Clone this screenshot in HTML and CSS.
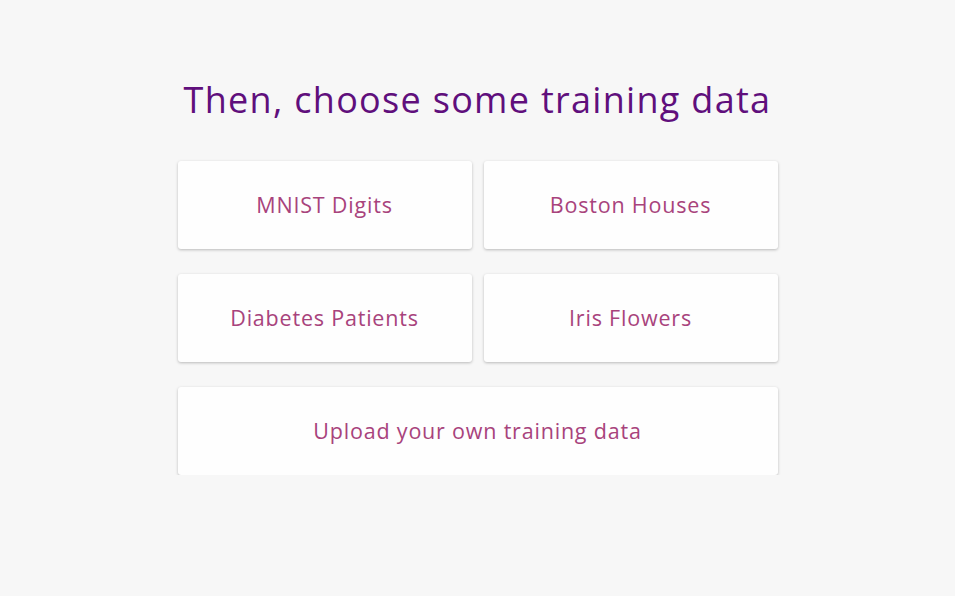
FILE: index.html
```html
<!DOCTYPE html>
<html lang="en">
<head>
<meta charset="utf-8">
<title>Choose training data</title>
<link rel="stylesheet" href="styles.css">
</head>
<body>
<main class="page">
  <h1 class="title">Then, choose some training data</h1>
  <div class="grid">
    <button class="card">MNIST Digits</button>
    <button class="card">Boston Houses</button>
    <button class="card">Diabetes Patients</button>
    <button class="card">Iris Flowers</button>
    <button class="card card-wide">Upload your own training data</button>
  </div>
</main>
</body>
</html>
```
FILE: styles.css
```css
html, body {
  margin: 0;
  padding: 0;
  background: #f7f7f7;
}
body {
  font-family: "Open Sans", "Noto Sans", sans-serif;
}
.page {
  display: flex;
  flex-direction: column;
  align-items: center;
  padding-top: 76px;
}
.title {
  margin: 0;
  font-weight: 400;
  font-size: 36px;
  letter-spacing: 1.3px;
  line-height: 48px;
  color: #600f7c;
}
.grid {
  margin-top: 37px;
  width: 600px;
  display: grid;
  grid-template-columns: 1fr 1fr;
  column-gap: 12px;
  row-gap: 25px;
}
.card {
  height: 88px;
  border: none;
  border-radius: 3px;
  background: #fefefe;
  box-shadow: 0 1px 3px rgba(0,0,0,0.25);
  font-family: inherit;
  font-size: 21.5px;
  letter-spacing: 0.8px;
  color: #a8437c;
  padding: 0 0 2px;
  cursor: pointer;
}
.card-wide {
  grid-column: 1 / span 2;
}
```
